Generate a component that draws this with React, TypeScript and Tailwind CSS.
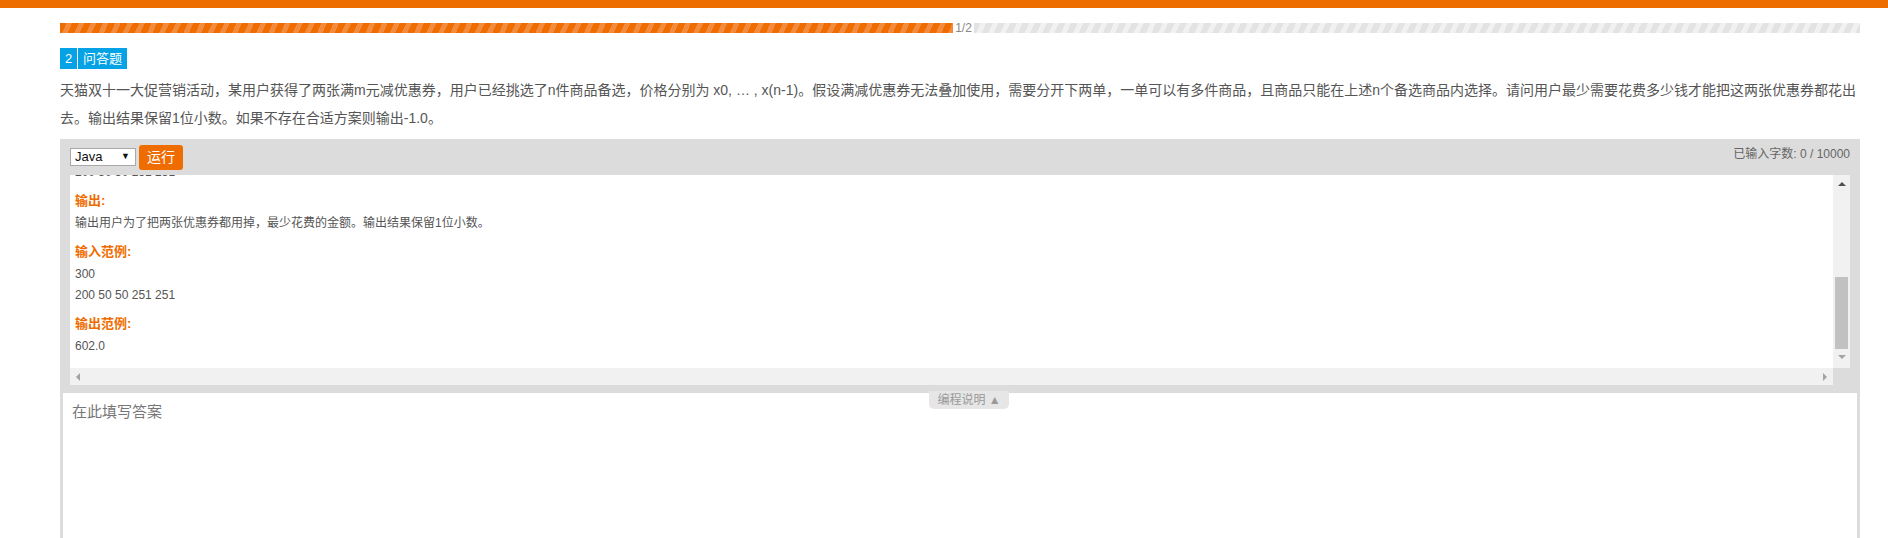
import React from 'react';

const font = "font-['Liberation_Sans','Noto_Sans_CJK_SC',sans-serif]";

const Heading: React.FC<{ children: React.ReactNode }> = ({ children }) => (
    <div className="pt-[6px] text-[13px] leading-[24px] font-bold text-[#ef6c00]">{children}</div>
);

const Line: React.FC<{ children: React.ReactNode }> = ({ children }) => (
    <div className="text-[12px] leading-[21px] text-[#555]">{children}</div>
);

const App: React.FC = () => {
    return (
        <div className={`min-h-[538px] w-full bg-white ${font}`}>
            <div className="h-[8px] bg-[#ee6d00]" />

            <div className="ml-[60px] w-[1800px]">
                {/* progress */}
                <div className="mt-[15px] flex h-[10px]">
                    <div className="w-[893px] bg-[repeating-linear-gradient(115deg,#ef6c00_0,#ef6c00_6px,#f28b3d_6px,#f28b3d_11px)]" />
                    <div className="flex w-[21px] items-center justify-center bg-white text-[12px] leading-[10px] text-[#888]">1/2</div>
                    <div className="flex-1 bg-[repeating-linear-gradient(115deg,#e3e3e3_0,#e3e3e3_6px,#f1f1f1_6px,#f1f1f1_11px)]" />
                </div>

                {/* badge */}
                <div className="mt-[15px] flex h-[21px] text-[13px] text-white">
                    <div className="flex w-[17px] items-center justify-center bg-[#05a2e6]">2</div>
                    <div className="ml-[1px] flex w-[49px] items-center justify-center bg-[#05a2e6]">问答题</div>
                </div>

                <div className="mt-[7px] text-[14px] leading-[28px] text-[#555]">
                    <div className="whitespace-nowrap">
                        天猫双十一大促营销活动，某用户获得了两张满m元减优惠券，用户已经挑选了n件商品备选，价格分别为 x0, … , x(n-1)。假设满减优惠券无法叠加使用，需要分开下两单，一单可以有多件商品，且商品只能在上述n个备选商品内选择。请问用户最少需要花费多少钱才能把这两张优惠券都花出
                    </div>
                    <div>去。输出结果保留1位小数。如果不存在合适方案则输出-1.0。</div>
                </div>

                {/* editor */}
                <div className="mt-[7px] bg-[#dcdcdc]">
                    <div className="flex h-[36px] items-center justify-between px-[10px]">
                        <div className="flex items-center gap-[3px]">
                            <div className="flex h-[18px] w-[66px] items-center justify-between border border-[#a9a9a9] bg-white pl-[4px] pr-[5px] text-[13px] font-normal text-[#111]">
                                <span>Java</span>
                                <span className="text-[9px]">▼</span>
                            </div>
                            <button className="h-[25px] w-[44px] rounded-[3px] bg-[#ef6c00] text-[14px] text-white">运行</button>
                        </div>
                        <div className="-mt-[6px] text-[12px] text-[#666]">已输入字数: 0 / 10000</div>
                    </div>

                    <div className="mx-[10px] flex h-[210px] flex-col">
                        <div className="flex h-[193px]">
                            <div className="flex-1 overflow-hidden bg-white pl-[5px]">
                                <div className="-mt-[13px]">
                                    <Line>200 50 50 251 251</Line>
                                    <Heading>输出:</Heading>
                                    <Line>输出用户为了把两张优惠券都用掉，最少花费的金额。输出结果保留1位小数。</Line>
                                    <Heading>输入范例:</Heading>
                                    <Line>300</Line>
                                    <Line>200 50 50 251 251</Line>
                                    <Heading>输出范例:</Heading>
                                    <Line>602.0</Line>
                                </div>
                            </div>
                            <div className="flex w-[17px] flex-col items-center bg-[#f1f1f1]">
                                <div className="mt-[7px] h-0 w-0 border-x-[4px] border-b-[4px] border-x-transparent border-b-[#505050]" />
                                <div className="mt-[91px] h-[72px] w-[13px] bg-[#c1c1c1]" />
                                <div className="mt-[6px] h-0 w-0 border-x-[4px] border-t-[4px] border-x-transparent border-t-[#a3a3a3]" />
                            </div>
                        </div>
                        <div className="flex h-[17px]">
                            <div className="flex flex-1 items-center justify-between bg-[#f1f1f1] px-[6px]">
                                <div className="h-0 w-0 border-y-[4px] border-r-[4px] border-y-transparent border-r-[#a3a3a3]" />
                                <div className="h-0 w-0 border-y-[4px] border-l-[4px] border-y-transparent border-l-[#a3a3a3]" />
                            </div>
                            <div className="w-[17px] bg-[#dcdcdc]" />
                        </div>
                    </div>
                    <div className="h-[8px]" />

                    <div className="relative h-[160px] border-x-[3px] border-[#dcdcdc] bg-white pl-[9px] pt-[8px]">
                        <div className="absolute -top-[2px] left-[866px] flex h-[18px] w-[80px] items-center justify-center rounded-b-[5px] bg-[#e6e6e6] text-[12px] text-[#999]">
                            编程说明 ▲
                        </div>
                        <div className="text-[15px] leading-[22px] text-[#777]">在此填写答案</div>
                    </div>
                </div>
            </div>
        </div>
    );
};

export default App;
